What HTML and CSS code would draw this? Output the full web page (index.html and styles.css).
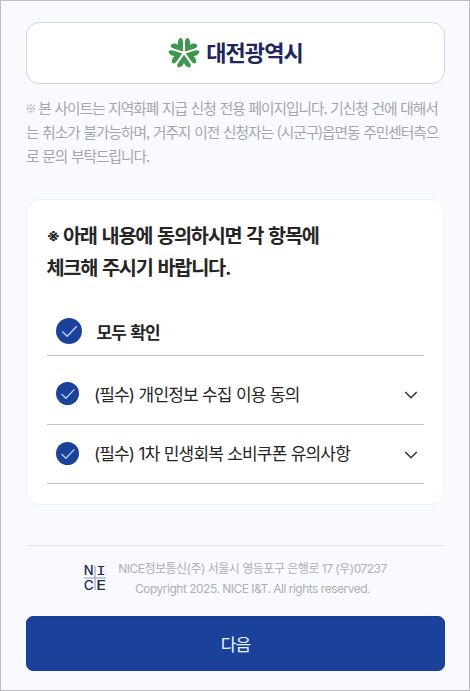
FILE: index.html
```html
<!DOCTYPE html>
<html lang="ko">
<head>
<meta charset="utf-8">
<title>대전광역시</title>
<link rel="stylesheet" href="styles.css">
</head>
<body>
<main class="page">
  <header class="brand">
    <svg class="brand-mark" viewBox="-16 -16 32 32" aria-hidden="true">
      <defs><path id="petal" d="M0-1.8 L-5.6-9.4 Q-7.6-12.2-6.5-13.8 Q-5.6-14.8-3.8-14.1 Q-1-13 0-10 Q1-13 3.8-14.1 Q5.6-14.8 6.5-13.8 Q7.6-12.2 5.6-9.4Z"/></defs>
      <g class="petals">
        <use href="#petal" transform="rotate(36)"/>
        <use href="#petal" transform="rotate(108)"/>
        <use href="#petal" transform="rotate(180)"/>
        <use href="#petal" transform="rotate(252)"/>
        <use href="#petal" transform="rotate(324)"/>
      </g>
    </svg>
    <span class="brand-name">대전광역시</span>
  </header>
  <p class="notice"><span class="mark">※</span> 본 사이트는 지역화폐 지급 신청 전용 페이지입니다. 기신청 건에 대해서<br>는 취소가 불가능하며, 거주지 이전 신청자는 (시군구)읍면동 주민센터측으<br>로 문의 부탁드립니다.</p>
  <section class="card">
    <h1 class="title"><span class="mark">※</span> 아래 내용에 동의하시면 각 항목에<br>체크해 주시기 바랍니다.</h1>
    <div class="row row-all">
      <svg class="check" viewBox="0 0 26 26"><circle cx="13" cy="13" r="13"/><path d="M6.2 13.5l5 4.8 9.6-10"/></svg>
      <span class="label">모두 확인</span>
    </div>
    <div class="row row-first">
      <svg class="check" viewBox="0 0 26 26"><circle cx="13" cy="13" r="13"/><path d="M6.2 13.5l5 4.8 9.6-10"/></svg>
      <span class="label">(필수) 개인정보 수집 이용 동의</span>
      <svg class="chevron" viewBox="0 0 14 8"><path d="M1.3 1L7 6.7 12.7 1"/></svg>
    </div>
    <div class="row row-second">
      <svg class="check" viewBox="0 0 26 26"><circle cx="13" cy="13" r="13"/><path d="M6.2 13.5l5 4.8 9.6-10"/></svg>
      <span class="label">(필수) 1차 민생회복 소비쿠폰 유의사항</span>
      <svg class="chevron" viewBox="0 0 14 8"><path d="M1.3 1L7 6.7 12.7 1"/></svg>
    </div>
  </section>
  <footer class="footer">
    <svg class="nice" viewBox="0 0 22 26">
      <path class="cross" d="M11 1v24M0 13H22"/>
      <text x="-.3" y="10.2" textLength="9.8" lengthAdjust="spacingAndGlyphs">N</text>
      <text class="serif-i" x="12.2" y="10.2" textLength="9.6" lengthAdjust="spacingAndGlyphs">I</text>
      <text x="-.3" y="24.8" textLength="10" lengthAdjust="spacingAndGlyphs">C</text>
      <text x="12.2" y="24.8" textLength="9.8" lengthAdjust="spacingAndGlyphs">E</text>
    </svg>
    <p class="company"><span class="address">NICE정보통신(주) 서울시 영등포구 은행로 17 (우)07237</span><br><span class="copyright">Copyright 2025. NICE I&amp;T. All rights reserved.</span></p>
  </footer>
  <button class="next" type="button">다음</button>
</main>
</body>
</html>
```
FILE: styles.css
```css
* { box-sizing: border-box; }
body { margin: 0; }
.page {
  width: 470px;
  height: 691px;
  padding: 21px 24px 0 25px;
  border: 1px solid #bbbbc0;
  background: #f9faff;
  font-family: Inter, "Noto Sans CJK KR", sans-serif;
  color: #252525;
  white-space: nowrap;
  overflow: hidden;
}
.brand {
  display: flex;
  align-items: center;
  justify-content: center;
  gap: 6px;
  height: 62px;
  border: 1px solid #d4d5d8;
  border-radius: 13px;
  background: #fff;
}
.brand-mark { width: 32px; height: 32px; }
.petals { fill: #41964f; }
.brand-name {
  color: #202659;
  font-size: 22px;
  font-weight: 700;
  letter-spacing: -0.9px;
  line-height: 30px;
  margin-top: -1px;
}
.notice {
  margin: 12px 0 0;
  color: #a5a6aa;
  font-family: "Noto Sans CJK KR", sans-serif;
  font-size: 14.7px;
  line-height: 24.2px;
  letter-spacing: -1.02px;
  word-spacing: 0.7px;
}
.mark { line-height: 1; }
.notice .mark { margin: 0 -1px 0 -1px; font-size: 11.5px; font-weight: 700; vertical-align: 1px; }
.card {
  height: 306px;
  margin-top: 30.4px;
  padding: 21px 20px 0;
  border: 1px solid #f0f1f6;
  border-radius: 14px;
  background: #fff;
}
.title {
  margin: 0 0 0 -0.5px;
  font-size: 19.7px;
  font-weight: 700;
  line-height: 31.5px;
  letter-spacing: -1.25px;
  word-spacing: 1.5px;
}
.title .mark { margin-right: -1px; font-size: 17px; vertical-align: 1px; }
.row {
  display: flex;
  align-items: center;
  border-bottom: 1px solid #c4c4c6;
  padding-left: 9px;
}
.check { width: 23px; height: 23px; flex: none; }
.check circle { fill: #1b429b; }
.check path { fill: none; stroke: #b9cdfa; stroke-width: 1.5; }
.label { font-size: 17px; line-height: 24px; letter-spacing: -0.87px; word-spacing: 0.5px; margin: 2px 0 0 15px; }
.row-all { height: 49px; margin-top: 23px; }
.row-all .check { width: 26px; height: 26px; }
.row-all .label { margin: 3px 0 0 14.5px; font-weight: 700; letter-spacing: -1px; word-spacing: 1.5px; }
.row-first { height: 69px; padding-top: 7px; }
.row-first .label { margin-top: 3px; }
.row-second { height: 59px; padding-bottom: 2px; }
.chevron { width: 14px; height: 8px; margin: 3px 6px 0 auto; }
.chevron path { fill: none; stroke: #303030; stroke-width: 1.5; }
.footer {
  display: flex;
  justify-content: center;
  gap: 12px;
  height: 71px;
  margin-top: 40px;
  padding-top: 13px;
  border-top: 1px solid #e7e8ee;
}
.nice {
  width: 22px;
  height: 26px;
  margin-top: 6px;
  fill: #202b46;
  font: 500 12.8px Inter, sans-serif;
  overflow: visible;
}
.cross { fill: none; stroke: #8c9aae; stroke-width: 1; }
.serif-i { font-family: "DejaVu Sans Mono", monospace; }
.company {
  margin: 0;
  color: #aeafb2;
  font-size: 12px;
  line-height: 20px;
  letter-spacing: -0.5px;
  text-align: center;
}
.next {
  display: block;
  width: 100%;
  height: 55px;
  padding: 0;
  border: 1px solid #173b90;
  border-radius: 7px;
  background: #1b429b;
  color: #e9f5ff;
  font: 400 17px/24px "Noto Sans CJK KR", sans-serif;
  letter-spacing: -0.9px;
}
```
